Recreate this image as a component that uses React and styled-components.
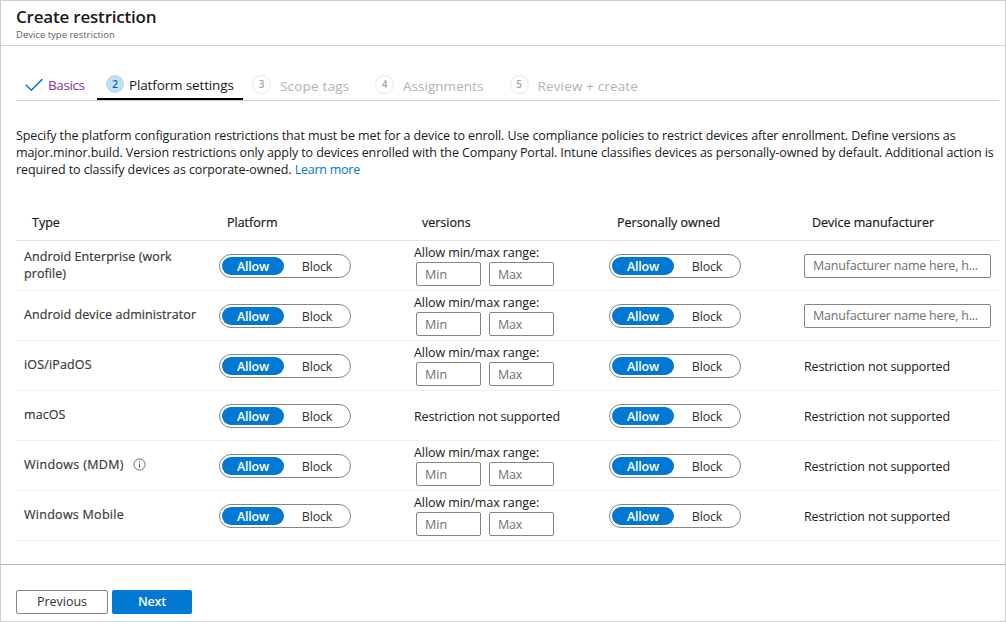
import React from "react";
import styled, { createGlobalStyle } from "styled-components";

const GlobalStyle = createGlobalStyle`
  *, *::before, *::after { box-sizing: border-box; }
  body {
    margin: 0;
    background: #fff;
    color: #1b1a19;
    font: 400 12.5px/17px "Open Sans", "Noto Sans", sans-serif;
  }
  button, input { font: inherit; color: inherit; margin: 0; }
`;

const Blade = styled.main`
  width: 1006px;
  height: 622px;
  display: flex;
  flex-direction: column;
  border: 1px solid #ccc;
  background: #fff;
  overflow: hidden;
`;

const Header = styled.header`
  height: 45px;
  padding: 4px 15px 0;
  border-bottom: 1px solid #d2d0ce;
  white-space: nowrap;
`;

const Title = styled.h1`
  margin: 0;
  font-size: 17px;
  line-height: 24px;
  font-weight: 600;
  letter-spacing: -0.2px;
  color: #1b1a19;
`;

const Subtitle = styled.p`
  margin: 0;
  font-size: 9.5px;
  line-height: 12px;
  letter-spacing: 0;
  color: #605e5c;
`;

const Content = styled.section`
  flex: 1;
  padding: 23px 6px 0 15px;
`;

const Tabs = styled.nav`
  display: flex;
  height: 32px;
  border-bottom: 1px solid #ccc;
`;

const Tab = styled.a`
  display: flex;
  align-items: flex-start;
  height: 31px;
  width: ${(p) => p.$width}px;
  padding: 6px 0 0 9px;
  font-size: 13.5px;
  line-height: 20px;
  white-space: nowrap;
  letter-spacing: ${(p) => p.$track}px;
  color: ${(p) => ({ done: "#8d2fa8", active: "#1b1a19", disabled: "#b5b3b1" })[p.$state]};
  border-bottom: ${(p) => (p.$state === "active" ? "2px solid #000" : "0")};
`;

const TabLabel = styled.span`
  padding-top: ${(p) => (p.$low ? 1 : 0)}px;
`;

const CheckIcon = styled.svg`
  flex: none;
  width: 18px;
  height: 14px;
  margin: 3px 5px 0 0;
`;

const StepNumber = styled.span`
  flex: none;
  width: ${(p) => (p.$active ? 18 : 19)}px;
  height: ${(p) => (p.$active ? 18 : 19)}px;
  margin-right: ${(p) => (p.$active ? 5 : 9)}px;
  border: ${(p) => (p.$active ? "1px solid #b3d6f2" : "1.5px solid #e8e8e8")};
  border-radius: 50%;
  background: ${(p) => (p.$active ? "#c3dff3" : "#fff")};
  color: ${(p) => (p.$active ? "#0064b4" : "#a3a3a3")};
  font-size: 10px;
  font-weight: 600;
  line-height: 16px;
  letter-spacing: 0;
  text-align: center;
`;

const Description = styled.p`
  margin: 26px 0 0;
  white-space: nowrap;
  letter-spacing: -0.1px;
`;

const Link = styled.a`
  color: #0078d4;
  letter-spacing: -0.24px;
`;

const Table = styled.div`
  margin-top: 27px;
`;

const Row = styled.div`
  display: grid;
  grid-template-columns: repeat(4, 195px) 203px;
  height: 50px;
  border-bottom: 1px solid #f0efee;
`;

const HeadRow = styled(Row)`
  height: 36px;
  border-bottom-color: #e6e5e4;
`;

const HeadCell = styled.div`
  padding: 9px 16px 0;
  font-weight: 500;
  -webkit-text-stroke: 0.2px currentColor;
  white-space: nowrap;
`;

const Cell = styled.div`
  display: flex;
  align-items: center;
  padding: 0 8px;
  white-space: nowrap;
`;

const NameCell = styled(Cell)`
  padding-bottom: 2px;
  font-weight: 500;
  -webkit-text-stroke: 0.2px currentColor;
  letter-spacing: ${(p) => p.$track}px;
  color: #3b3a39;
`;

const NameText = styled.span`
  white-space: pre-line;
`;

const InfoIcon = styled.svg`
  width: 13px;
  height: 13px;
  margin: -1px 0 0 9px;
`;

const ToggleFrame = styled.div`
  display: flex;
  width: 132px;
  height: 24px;
  margin-top: 1px;
  padding: 2px;
  border: 1px solid #868482;
  border-radius: 12px;
`;

const ToggleOption = styled.span`
  flex: none;
  width: ${(p) => (p.$on ? 62 : 66)}px;
  height: 18px;
  border-radius: 9px;
  text-align: center;
  line-height: 19px;
  letter-spacing: ${(p) => (p.$on ? -0.2 : -0.16)}px;
  font-weight: ${(p) => (p.$on ? 600 : 400)};
  color: ${(p) => (p.$on ? "#fff" : "#323130")};
  background: ${(p) => (p.$on ? "#0078d4" : "transparent")};
`;

const VersionCell = styled.div`
  display: flex;
  flex-direction: column;
  padding: 3px 8px 0;
  white-space: nowrap;
  letter-spacing: -0.08px;
`;

const RangeFields = styled.div`
  display: flex;
  gap: 8px;
  margin: 1px 0 0 2px;
`;

const RangeLabel = styled.span`
  height: 17px;
`;

const Field = styled.input`
  display: block;
  flex: none;
  width: ${(p) => p.$width}px;
  height: 24px;
  padding: 0 8px;
  border: 1px solid #868482;
  border-radius: 2px;
  background: #fff;
  line-height: 17px;
  letter-spacing: ${(p) => p.$track || 0}px;
  &::placeholder { color: #72706e; opacity: 1; }
`;

const UnsupportedText = styled.span`
  padding-top: 2px;
  letter-spacing: -0.12px;
`;

const Footer = styled.footer`
  display: flex;
  gap: 4px;
  height: 57px;
  padding: 25px 15px 0;
  border-top: 1px solid #b8b6b4;
`;

const Button = styled.button`
  width: ${(p) => (p.$primary ? 80 : 92)}px;
  height: 24px;
  padding: 0;
  border: 1px solid ${(p) => (p.$primary ? "#0078d4" : "#868482")};
  border-radius: 2px;
  background: ${(p) => (p.$primary ? "#0078d4" : "#fff")};
  color: ${(p) => (p.$primary ? "#fff" : "#323130")};
  font-weight: ${(p) => (p.$primary ? 600 : 400)};
  letter-spacing: ${(p) => (p.$primary ? -0.15 : 0)}px;
  line-height: 22px;
`;

const columns = ["Type", "Platform", "versions", "Personally owned", "Device manufacturer"];

const steps = [
  { number: 3, label: "Scope tags", width: 123, track: 0.2 },
  { number: 4, label: "Assignments", width: 134.5, track: 0.03 },
  { number: 5, label: "Review + create", width: 150, track: 0.15 },
];

const platforms = [
  { name: "Android Enterprise (work\nprofile)", range: true, manufacturer: true },
  { name: "Android device administrator", range: true, manufacturer: true },
  { name: "iOS/iPadOS", range: true, track: 0.15 },
  { name: "macOS" },
  { name: "Windows (MDM)", range: true, info: true, track: 0.35 },
  { name: "Windows Mobile", range: true, track: 0.27 },
];

function Toggle() {
  return (
    <ToggleFrame>
      <ToggleOption $on>Allow</ToggleOption>
      <ToggleOption>Block</ToggleOption>
    </ToggleFrame>
  );
}

function Unsupported() {
  return (
    <Cell>
      <UnsupportedText>Restriction not supported</UnsupportedText>
    </Cell>
  );
}

function PlatformRow({ item }) {
  return (
    <Row>
      <NameCell $track={item.track ?? 0.08}>
        <NameText>{item.name}</NameText>
        {item.info && (
          <InfoIcon viewBox="0 0 13 13" fill="none" stroke="#605e5c">
            <circle cx="6.5" cy="6.5" r="5.6" strokeWidth="0.9" />
            <path d="M6.5 5.5v4M6.5 3.3v1.1" />
          </InfoIcon>
        )}
      </NameCell>
      <Cell><Toggle /></Cell>
      {item.range ? (
        <VersionCell>
          <RangeLabel>Allow min/max range:</RangeLabel>
          <RangeFields>
            <Field $width={65} placeholder="Min" />
            <Field $width={65} $track={-0.2} placeholder="Max" />
          </RangeFields>
        </VersionCell>
      ) : (
        <Unsupported />
      )}
      <Cell><Toggle /></Cell>
      {item.manufacturer ? (
        <Cell>
          <Field $width={187} $track={-0.2} placeholder="Manufacturer name here, h..." />
        </Cell>
      ) : (
        <Unsupported />
      )}
    </Row>
  );
}

export default function App() {
  return (
    <>
      <GlobalStyle />
      <Blade>
        <Header>
          <Title>Create restriction</Title>
          <Subtitle>Device type restriction</Subtitle>
        </Header>
        <Content>
          <Tabs>
            <Tab $state="done" $width={81} $track={-0.4}>
              <CheckIcon viewBox="0 0 18 14" fill="none" stroke="#0078d4" strokeWidth="1.5">
                <path d="M0.8 6.8L6.3 12.2L17.4 1.1" />
              </CheckIcon>
              <TabLabel>Basics</TabLabel>
            </Tab>
            <Tab $state="active" $width={146} $track={-0.14}>
              <StepNumber $active>2</StepNumber>
              <TabLabel>Platform settings</TabLabel>
            </Tab>
            {steps.map((s) => (
              <Tab key={s.number} $state="disabled" $width={s.width} $track={s.track}>
                <StepNumber>{s.number}</StepNumber>
                <TabLabel $low>{s.label}</TabLabel>
              </Tab>
            ))}
          </Tabs>
          <Description>
            Specify the platform configuration restrictions that must be met for a device to enroll. Use compliance
            policies to restrict devices after enrollment. Define versions as
            <br />
            major.minor.build. Version restrictions only apply to devices enrolled with the Company Portal. Intune
            classifies devices as personally-owned by default. Additional action is
            <br />
            required to classify devices as corporate-owned. <Link>Learn more</Link>
          </Description>
          <Table>
            <HeadRow>
              {columns.map((c) => (
                <HeadCell key={c}>{c}</HeadCell>
              ))}
            </HeadRow>
            {platforms.map((p) => (
              <PlatformRow key={p.name} item={p} />
            ))}
          </Table>
        </Content>
        <Footer>
          <Button>Previous</Button>
          <Button $primary>Next</Button>
        </Footer>
      </Blade>
    </>
  );
}
